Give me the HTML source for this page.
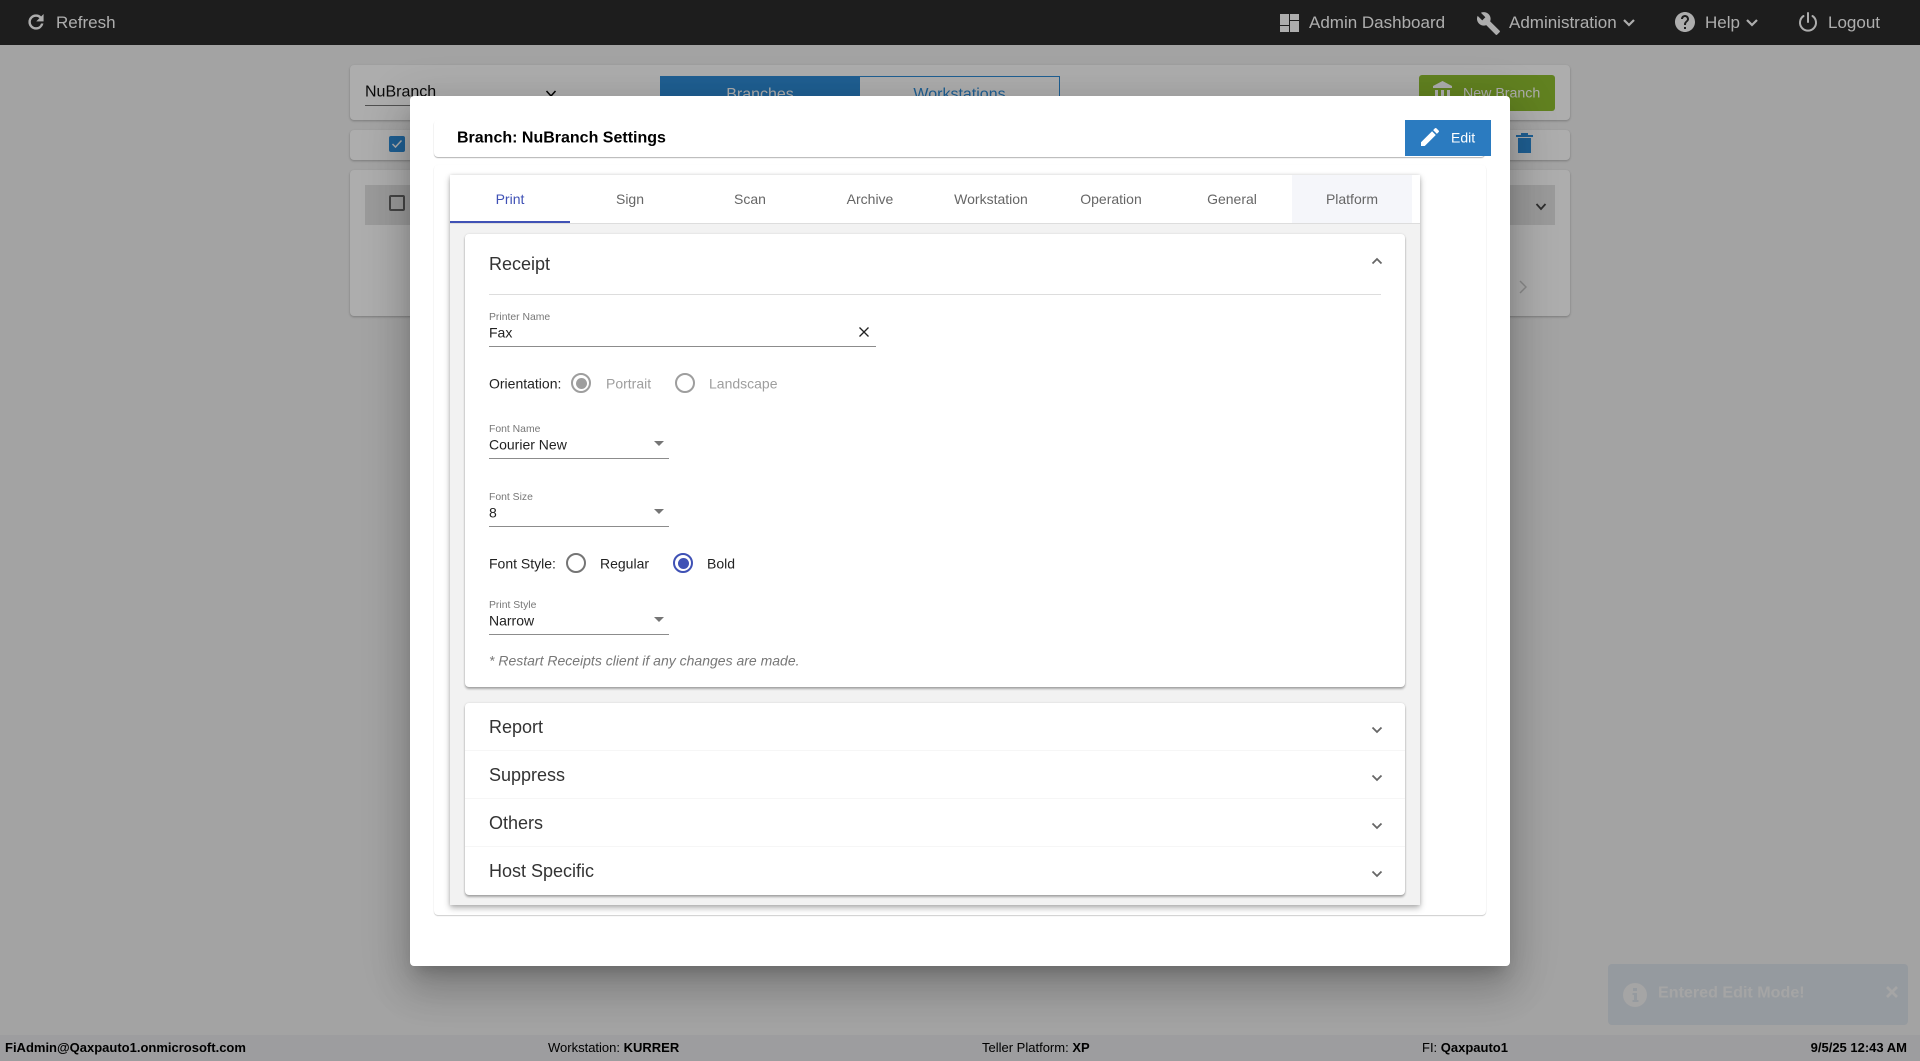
<!DOCTYPE html>
<html lang="en">
<head>
<meta charset="utf-8">
<title>Branch Settings</title>
<style>
html,body{margin:0;padding:0;width:1920px;height:1061px;overflow:hidden;background:#f0f0f0;font-family:"Liberation Sans",Arial,sans-serif;}
*{box-sizing:border-box;}
.a{position:absolute;}
.t{position:absolute;white-space:nowrap;transform:translateY(-50%);line-height:1.2;}
.card{position:absolute;background:#fff;border-radius:4px;box-shadow:0 1px 2px rgba(0,0,0,.25);}
svg{position:absolute;display:block;}
#nav{position:absolute;left:0;top:0;width:1920px;height:45px;background:#2c2c2c;}
#nav .t{color:#fff;font-size:17px;top:23px;}
#foot{position:absolute;left:0;top:1035px;width:1920px;height:26px;background:#e7e8ea;}
#foot .t{font-size:13px;color:#000;top:13px;}
#overlay{position:absolute;left:0;top:0;width:1920px;height:1061px;background:rgba(0,0,0,.32);}
#modal{position:absolute;left:410px;top:96px;width:1100px;height:870px;background:#fff;border-radius:4px;box-shadow:0 11px 15px -7px rgba(0,0,0,.2),0 24px 38px 3px rgba(0,0,0,.14),0 9px 46px 8px rgba(0,0,0,.12);}
.tab{position:absolute;top:175px;height:48px;width:120px;text-align:center;line-height:48px;font-size:14px;color:#666;}
.lbl{font-size:10.4px;color:#777;left:489px;margin-top:1px;}
.val{font-size:14px;color:#222;left:489px;margin-top:1px;}
.line{position:absolute;height:1px;background:#8c8c8c;left:489px;}
.arrow{position:absolute;width:0;height:0;border-left:5px solid transparent;border-right:5px solid transparent;border-top:5px solid #757575;left:654px;}
.radio{position:absolute;width:20px;height:20px;border-radius:50%;border:2px solid #757575;background:#fff;}
.radio i{position:absolute;left:2.5px;top:2.5px;width:11px;height:11px;border-radius:50%;display:block;}
.row{font-size:18px;color:#333;left:489px;margin-top:1px;}
.ch{position:absolute;}
</style>
</head>
<body>
<!-- underlying page -->
<div id="nav">
  <svg style="left:25px;top:11px" width="22" height="22" viewBox="0 0 24 24"><path fill="#fff" stroke="#fff" stroke-width=".6" d="M17.650 6.350A7.958 7.958 0 0 0 12 4c-4.420 0-7.990 3.580-7.990 8s3.570 8 7.990 8c3.730 0 6.840-2.550 7.730-6h-2.080A5.990 5.990 0 0 1 12 18c-3.310 0-6-2.690-6-6s2.690-6 6-6c1.660 0 3.140.69 4.220 1.780L13 11h7V4l-2.350 2.350z"/></svg>
  <div class="t" style="left:56px">Refresh</div>
  <svg style="left:1280px;top:14px" width="19" height="18" viewBox="0 0 19 18"><path fill="#fff" d="M0 0h9v11H0zM0 12h9v6H0zM10 0h9v6h-9zM10 7h9v11h-9z"/></svg>
  <div class="t" style="left:1309px">Admin Dashboard</div>
  <svg style="left:1476px;top:11px" width="25" height="25" viewBox="0 0 24 24"><path fill="#fff" d="M22.700 19l-9.100-9.100c.9-2.300.4-5-1.500-6.900-2-2-5-2.400-7.400-1.300L9 6 6 9 1.600 4.700C.4 7.100.9 10.100 2.900 12.100c1.900 1.900 4.600 2.400 6.900 1.500l9.100 9.100c.4.4 1 .4 1.400 0l2.300-2.300c.5-.4.5-1.100.1-1.400z"/></svg>
  <div class="t" style="left:1509px">Administration</div>
  <svg style="left:1622px;top:18px" width="14" height="10" viewBox="0 0 14 10"><path fill="none" stroke="#fff" stroke-width="2.200" d="M2 2l5 5 5-5"/></svg>
  <svg style="left:1673px;top:10px" width="24" height="24" viewBox="0 0 24 24"><path fill="#fff" d="M12 2C6.480 2 2 6.480 2 12s4.480 10 10 10 10-4.480 10-10S17.520 2 12 2zm1 17h-2v-2h2v2zm2.070-7.750l-.9.92C13.450 12.900 13 13.500 13 15h-2v-.5c0-1.100.45-2.100 1.170-2.830l1.240-1.260c.37-.36.59-.86.59-1.410 0-1.100-.9-2-2-2s-2 .9-2 2H8c0-2.210 1.790-4 4-4s4 1.790 4 4c0 .88-.36 1.680-.93 2.250z"/></svg>
  <div class="t" style="left:1705px">Help</div>
  <svg style="left:1745px;top:18px" width="14" height="10" viewBox="0 0 14 10"><path fill="none" stroke="#fff" stroke-width="2.200" d="M2 2l5 5 5-5"/></svg>
  <svg style="left:1797px;top:11px" width="22" height="22" viewBox="0 0 22 22"><path fill="none" stroke="#fff" stroke-width="2" stroke-linecap="round" d="M11 2v9M6.500 5a8 8 0 1 0 9 0"/></svg>
  <div class="t" style="left:1828px">Logout</div>
</div>

<div class="card" style="left:350px;top:65px;width:1220px;height:55px"></div>
<div class="t" style="left:365px;top:92px;font-size:16px;color:#111">NuBranch</div>
<div class="a" style="left:365px;top:105px;width:190px;height:1px;background:#777"></div>
<svg style="left:545px;top:90px" width="12" height="8" viewBox="0 0 12 8"><path fill="none" stroke="#000" stroke-width="1.500" d="M1.500 1l4.500 5 4.500-5"/></svg>
<div class="a" style="left:660px;top:76px;width:200px;height:40px;background:#2e8cd8;color:#fff;text-align:center;font-size:16px;line-height:38px">Branches</div>
<div class="a" style="left:860px;top:76px;width:200px;height:40px;border:1px solid #2e8cd8;border-left:0;color:#2e8cd8;text-align:center;font-size:16px;line-height:36px">Workstations</div>
<div class="a" style="left:1419px;top:75px;width:136px;height:36px;background:#8fbf30;border-radius:3px"></div>
<svg style="left:1431px;top:80px" width="24" height="24" viewBox="0 0 24 24"><path fill="#fff" d="M4 10v7h3v-7H4zm6 0v7h3v-7h-3zM2 22h19v-3H2v3zm14-12v7h3v-7h-3zm-4.500-9L2 6v2h19V6l-9.500-5z"/></svg>
<div class="t" style="left:1463px;top:94px;font-size:14.200px;color:#fff">New Branch</div>

<div class="card" style="left:350px;top:130px;width:1220px;height:30px"></div>
<div class="a" style="left:389px;top:136px;width:16px;height:16px;border-radius:2px;background:#2e8cd8"></div>
<svg style="left:389px;top:136px" width="16" height="16" viewBox="0 0 16 16"><path fill="none" stroke="#fff" stroke-width="1.500" d="M3.500 8l3 3 6-6.500"/></svg>
<svg style="left:1516px;top:133px" width="17" height="20" viewBox="0 0 17 20"><path fill="#2e8cd8" d="M0 2h17v2H0zM5 0h7v2H5zM2 5h13v15H2z"/></svg>

<div class="card" style="left:350px;top:170px;width:1220px;height:146px"></div>
<div class="a" style="left:365px;top:185px;width:1190px;height:40px;background:#e4e4e4"></div>
<div class="a" style="left:389px;top:195px;width:16px;height:16px;border-radius:2px;border:2px solid #666"></div>
<svg style="left:1535px;top:203px" width="12" height="8" viewBox="0 0 12 8"><path fill="none" stroke="#444" stroke-width="1.800" d="M1.500 1l4.500 5 4.500-5"/></svg>
<svg style="left:1519px;top:280px" width="8" height="14" viewBox="0 0 8 14"><path fill="none" stroke="#ccc" stroke-width="1.500" d="M1 1l6 6-6 6"/></svg>

<div class="a" style="left:1608px;top:964px;width:300px;height:61px;background:#dce3ea;border-radius:4px"></div>
<svg style="left:1623px;top:983px" width="24" height="24" viewBox="0 0 24 24"><circle cx="12" cy="12" r="12" fill="#f3f3f3"/><path fill="#dce3ea" d="M10 5h4v3h-4zM9.500 10H14v7h1.500v2h-6v-2H11v-5H9.500z"/></svg>
<div class="t" style="left:1658px;top:993px;font-size:16.100px;font-weight:bold;color:#f3f3f3">Entered Edit Mode!</div>
<svg style="left:1886px;top:986px" width="12" height="12" viewBox="0 0 12 12"><path fill="none" stroke="#f3f3f3" stroke-width="2.800" d="M1 1l10 10M11 1L1 11"/></svg>

<div id="foot">
  <div class="t" style="left:5px;font-weight:bold">FiAdmin@Qaxpauto1.onmicrosoft.com</div>
  <div class="t" style="left:548px">Workstation: <b>KURRER</b></div>
  <div class="t" style="left:982px">Teller Platform: <b>XP</b></div>
  <div class="t" style="left:1422px">FI: <b>Qaxpauto1</b></div>
  <div class="t" style="right:13px;font-weight:bold">9/5/25 12:43 AM</div>
</div>

<div id="overlay"></div>

<!-- modal -->
<div id="modal"></div>
<div class="card" style="left:434px;top:120px;width:1051px;height:37px;box-shadow:0 1px 1px rgba(0,0,0,.3)"></div>
<div class="t" style="left:457px;top:138px;font-size:16px;font-weight:bold;color:#000">Branch: NuBranch Settings</div>
<div class="a" style="left:1405px;top:120px;width:86px;height:36px;background:#2b7bc0"></div>
<svg style="left:1418px;top:125px" width="24" height="24" viewBox="0 0 24 24"><path fill="#fff" d="M3 17.250V21h3.750L17.810 9.940l-3.750-3.750L3 17.250zM20.710 7.040c.39-.39.39-1.020 0-1.410l-2.340-2.340c-.39-.39-1.020-.39-1.410 0l-1.830 1.830 3.750 3.750 1.830-1.830z"/></svg>
<div class="t" style="left:1451px;top:138px;font-size:14px;color:#fff">Edit</div>

<div class="card" style="left:434px;top:165px;width:1052px;height:750px;box-shadow:0 1px 1px rgba(0,0,0,.2),0 0 1px rgba(0,0,0,.04)"></div>
<div class="a" style="left:450px;top:175px;width:970px;height:730px;background:#f2f2f2;box-shadow:0 3px 6px rgba(0,0,0,.3),0 0 3px rgba(0,0,0,.12)"></div>
<div class="a" style="left:450px;top:175px;width:970px;height:49px;background:#fff;border-bottom:1px solid #ddd"></div>
<div class="tab" style="left:450px;color:#3f51b5">Print</div>
<div class="tab" style="left:570px">Sign</div>
<div class="tab" style="left:690px">Scan</div>
<div class="tab" style="left:810px">Archive</div>
<div class="tab" style="left:931px">Workstation</div>
<div class="tab" style="left:1051px">Operation</div>
<div class="tab" style="left:1172px">General</div>
<div class="tab" style="left:1292px;background:#f5f6fa;height:48px">Platform</div>
<div class="a" style="left:450px;top:221px;width:120px;height:2px;background:#3f51b5"></div>

<!-- Receipt panel -->
<div class="card" style="left:465px;top:234px;width:940px;height:453px;box-shadow:0 2px 2px rgba(0,0,0,.3),0 0 2px rgba(0,0,0,.12)"></div>
<div class="t row" style="top:264px">Receipt</div>
<svg class="ch" style="left:1371px;top:257px" width="12" height="8" viewBox="0 0 12 8"><path fill="none" stroke="#666" stroke-width="1.800" d="M1.500 6.500l4.500-4.500 4.500 4.500"/></svg>
<div class="a" style="left:489px;top:294px;width:892px;height:1px;background:#ddd"></div>

<div class="t lbl" style="top:317px">Printer Name</div>
<div class="t val" style="top:332px">Fax</div>
<svg style="left:859px;top:327px" width="10" height="10" viewBox="0 0 10 10"><path fill="none" stroke="#222" stroke-width="1.300" d="M.5.500l9 9M9.500.500l-9 9"/></svg>
<div class="line" style="top:346px;width:387px"></div>

<div class="t val" style="top:383px">Orientation:</div>
<div class="radio" style="left:571px;top:373px;border-color:#9e9e9e"><i style="background:#9e9e9e"></i></div>
<div class="t val" style="left:606px;top:383px;color:#9e9e9e">Portrait</div>
<div class="radio" style="left:675px;top:373px;border-color:#9e9e9e"></div>
<div class="t val" style="left:709px;top:383px;color:#9e9e9e">Landscape</div>

<div class="t lbl" style="top:429px">Font Name</div>
<div class="t val" style="top:444px">Courier New</div>
<div class="arrow" style="top:441px"></div>
<div class="line" style="top:458px;width:180px"></div>

<div class="t lbl" style="top:497px">Font Size</div>
<div class="t val" style="top:512px">8</div>
<div class="arrow" style="top:509px"></div>
<div class="line" style="top:526px;width:180px"></div>

<div class="t val" style="top:563px">Font Style:</div>
<div class="radio" style="left:566px;top:553px"></div>
<div class="t val" style="left:600px;top:563px">Regular</div>
<div class="radio" style="left:673px;top:553px;border-color:#3f51b5"><i style="background:#3f51b5"></i></div>
<div class="t val" style="left:707px;top:563px">Bold</div>

<div class="t lbl" style="top:605px">Print Style</div>
<div class="t val" style="top:620px">Narrow</div>
<div class="arrow" style="top:617px"></div>
<div class="line" style="top:634px;width:180px"></div>

<div class="t" style="left:489px;top:661px;font-size:14px;font-style:italic;color:#777">* Restart Receipts client if any changes are made.</div>

<!-- Collapsed panels -->
<div class="card" style="left:465px;top:703px;width:940px;height:192px;box-shadow:0 2px 2px rgba(0,0,0,.3),0 0 2px rgba(0,0,0,.12)"></div>
<div class="a" style="left:465px;top:750px;width:940px;height:1px;background:#f6f6f6"></div>
<div class="a" style="left:465px;top:798px;width:940px;height:1px;background:#f6f6f6"></div>
<div class="a" style="left:465px;top:846px;width:940px;height:1px;background:#f6f6f6"></div>
<div class="t row" style="top:727px">Report</div>
<div class="t row" style="top:775px">Suppress</div>
<div class="t row" style="top:823px">Others</div>
<div class="t row" style="top:871px">Host Specific</div>
<svg class="ch" style="left:1371px;top:726px" width="12" height="8" viewBox="0 0 12 8"><path fill="none" stroke="#666" stroke-width="1.800" d="M1.500 1.500l4.500 4.500 4.500-4.500"/></svg>
<svg class="ch" style="left:1371px;top:774px" width="12" height="8" viewBox="0 0 12 8"><path fill="none" stroke="#666" stroke-width="1.800" d="M1.500 1.500l4.500 4.500 4.500-4.500"/></svg>
<svg class="ch" style="left:1371px;top:822px" width="12" height="8" viewBox="0 0 12 8"><path fill="none" stroke="#666" stroke-width="1.800" d="M1.500 1.500l4.500 4.500 4.500-4.500"/></svg>
<svg class="ch" style="left:1371px;top:870px" width="12" height="8" viewBox="0 0 12 8"><path fill="none" stroke="#666" stroke-width="1.800" d="M1.500 1.500l4.500 4.500 4.500-4.500"/></svg>
</body>
</html>
